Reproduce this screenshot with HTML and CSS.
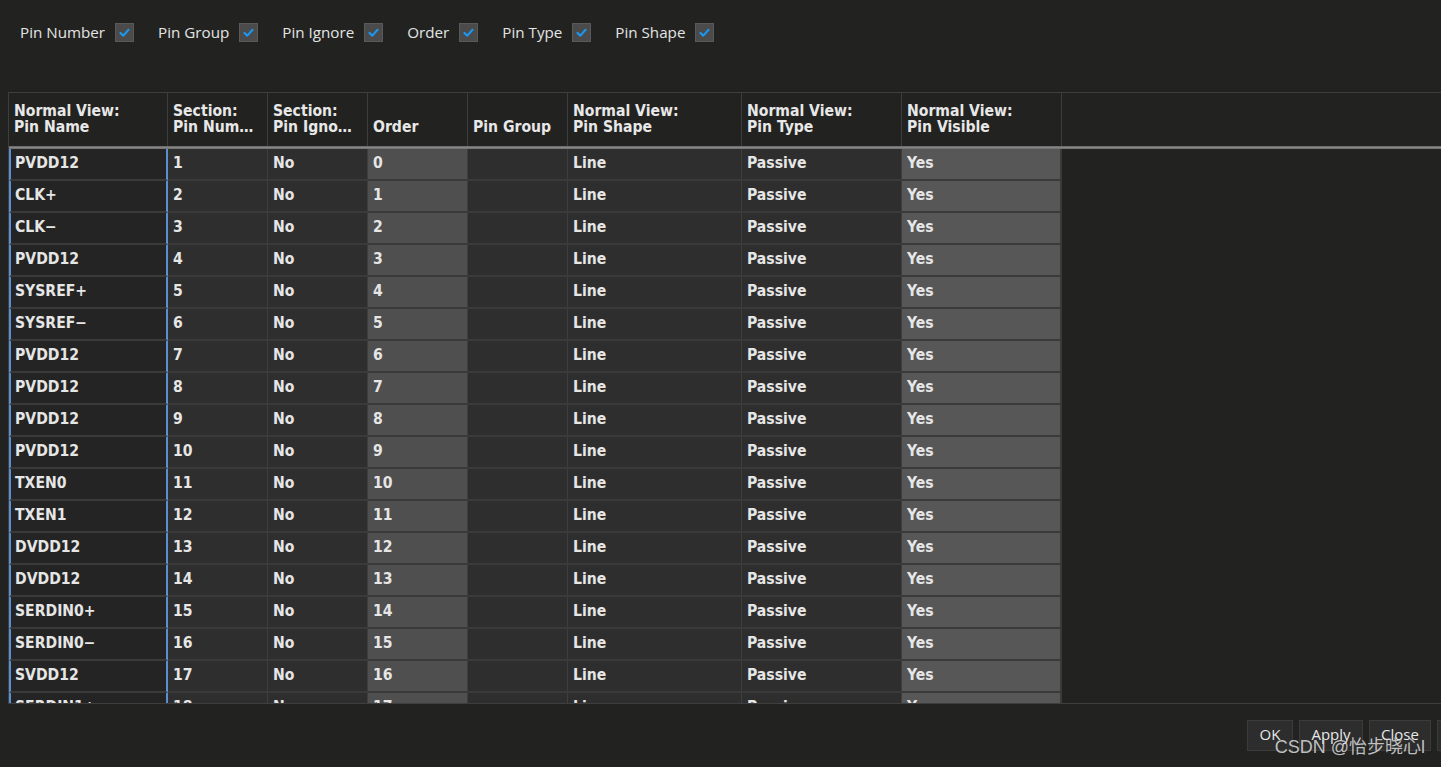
FILE: index.html
```html
<!DOCTYPE html>
<html>
<head>
<meta charset="utf-8">
<link rel="stylesheet" href="styles.css">
</head>
<body>
<div class="page">
  <div class="toolbar">
    <label class="opt">Pin Number <span class="cb"><svg viewBox="0 0 19 19"><path d="M5 10 L8.2 13 L14 6.5" /></svg></span></label>
    <label class="opt">Pin Group <span class="cb"><svg viewBox="0 0 19 19"><path d="M5 10 L8.2 13 L14 6.5" /></svg></span></label>
    <label class="opt">Pin Ignore <span class="cb"><svg viewBox="0 0 19 19"><path d="M5 10 L8.2 13 L14 6.5" /></svg></span></label>
    <label class="opt">Order <span class="cb"><svg viewBox="0 0 19 19"><path d="M5 10 L8.2 13 L14 6.5" /></svg></span></label>
    <label class="opt">Pin Type <span class="cb"><svg viewBox="0 0 19 19"><path d="M5 10 L8.2 13 L14 6.5" /></svg></span></label>
    <label class="opt">Pin Shape <span class="cb"><svg viewBox="0 0 19 19"><path d="M5 10 L8.2 13 L14 6.5" /></svg></span></label>
  </div>

  <div class="grid">
    <div class="hrow">
      <div class="hc w160">Normal View:<br>Pin Name</div>
      <div class="hc w100">Section:<br>Pin Num…</div>
      <div class="hc w100">Section:<br>Pin Igno…</div>
      <div class="hc w100">Order</div>
      <div class="hc w100">Pin Group</div>
      <div class="hc w174">Normal View:<br>Pin Shape</div>
      <div class="hc w160">Normal View:<br>Pin Type</div>
      <div class="hc w160">Normal View:<br>Pin Visible</div>
      <div class="hc fill"></div>
    </div>
    <div class="hline"></div>
    <div class="body" id="body"></div>
  </div>

  <div class="footer">
    <div class="btns">
      <button class="btn ok">OK</button>
      <button class="btn apply">Apply</button>
      <button class="btn close">Close</button>
      <button class="btn help">Help</button>
    </div>
    <div class="watermark">CSDN @怡步晓心l</div>
  </div>
</div>
<script>
var names=["PVDD12","CLK+","CLK\u2212","PVDD12","SYSREF+","SYSREF\u2212","PVDD12","PVDD12","PVDD12","PVDD12","TXEN0","TXEN1","DVDD12","DVDD12","SERDIN0+","SERDIN0\u2212","SVDD12","SERDIN1+"];
var b=document.getElementById('body');
var html='';
for(var i=0;i<names.length;i++){
  html+='<div class="row"><div class="c w160 name">'+names[i]+'</div><div class="c w100">'+(i+1)+'</div><div class="c w100">No</div><div class="c w100 order">'+i+'</div><div class="c w100"></div><div class="c w174">Line</div><div class="c w160">Passive</div><div class="c w160 vis">Yes</div></div>';
}
b.innerHTML=html;
</script>
</body>
</html>
```

FILE: styles.css
```css
* { box-sizing: border-box; }
html, body { margin: 0; padding: 0; }
body {
  background: #222321;
  width: 1441px;
  height: 767px;
  overflow: hidden;
  font-family: "DejaVu Sans Condensed", "DejaVu Sans", sans-serif;
  color: #e6e6e6;
}
.page {
  width: 1441px;
  height: 767px;
  display: flex;
  flex-direction: column;
  position: relative;
}
.toolbar {
  height: 92px;
  display: flex;
  align-items: flex-start;
  padding: 21px 0 0 20px;
  gap: 24px;
  font-family: "Open Sans", sans-serif;
  font-size: 15.2px;
  color: #e4e4e4;
}
.opt {
  display: flex;
  align-items: center;
  gap: 10px;
  height: 21px;
}
.cb {
  width: 19px;
  height: 19px;
  background: #4a4b4a;
  border: 1px solid #585958;
  display: inline-block;
  margin-top: 2px;
}
.cb svg {
  width: 17px;
  height: 17px;
  display: block;
}
.cb path {
  fill: none;
  stroke: #1d96f0;
  stroke-width: 2.4;
  stroke-linecap: round;
  stroke-linejoin: round;
}
.grid {
  margin-left: 8px;
  height: 612px;
  border-top: 1px solid #3d3e3d;
  border-left: 1px solid #3d3e3d;
  border-bottom: 1px solid #3d3e3d;
  overflow: hidden;
  display: flex;
  flex-direction: column;
  font-size: 15.6px;
}
.hrow {
  display: flex;
  height: 53px;
  flex: none;
}
.hc {
  flex: none;
  border-right: 1px solid #3d3e3d;
  padding: 0 0 11px 5px;
  display: flex;
  align-items: flex-end;
  line-height: 16px;
  font-weight: bold;
  color: #e8e8e8;
}
.hc.fill { flex: 1; border-right: none; }
.hline {
  height: 3px;
  flex: none;
  background: linear-gradient(#5a5b5a, #8a8b8a 40%, #6a6b6a);
}
.w160 { width: 160px; }
.w100 { width: 100px; }
.w174 { width: 174px; }
.hrow .w160:first-child { width: 159px; }
.body { flex: 1; overflow: hidden; }
.row {
  display: flex;
  height: 32px;
}
.c {
  flex: none;
  background: #2e2e2e;
  border-right: 1px solid #3d3e3d;
  border-bottom: 2px solid #3a3a3a;
  padding: 0 0 3px 5px;
  display: flex;
  align-items: center;
  font-weight: bold;
  color: #e6e6e6;
}
.c.name {
  width: 159px;
  background: #232423;
  border-left: 2px solid #5a8fd4;
  border-right: 2px solid #5a8fd4;
  padding-left: 4px;
}
.c.order { background: #4f4f4f; }
.c.vis { background: #575757; border-right: 2px solid #3a3a3a; }
.footer {
  flex: 1;
  position: relative;
  display: flex;
  justify-content: flex-end;
  align-items: flex-start;
  padding-top: 16px;
  margin-right: -58px;
}
.btns { display: flex; gap: 6px; }
.btn {
  height: 31px;
  background: #2c2d2c;
  border: 1px solid #3a3b3a;
  color: #e8e8e8;
  font-family: "Open Sans", sans-serif;
  font-size: 15px;
  padding: 0 0 3px 0;
}
.ok { width: 46px; }
.apply { width: 64px; }
.close { width: 62px; }
.help { width: 62px; }
.watermark {
  position: absolute;
  right: 74px;
  top: 28px;
  font-family: "Liberation Sans", "Noto Sans CJK SC", sans-serif;
  font-size: 18px;
  color: rgba(220, 220, 220, 0.85);
}
```
